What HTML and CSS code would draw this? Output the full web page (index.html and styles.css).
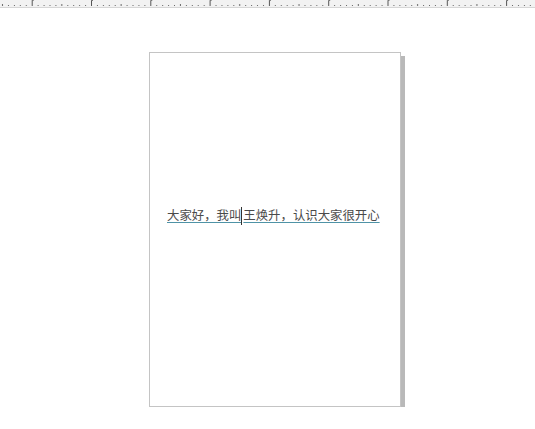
FILE: index.html
```html
<!DOCTYPE html>
<html lang="zh">
<head>
<meta charset="utf-8">
<link rel="stylesheet" href="styles.css">
</head>
<body>
<div class="ruler">
<svg width="535" height="8" viewBox="0 0 535 8">
<defs>
<pattern id="tick" x="31.7" y="0" width="59.3" height="8" patternUnits="userSpaceOnUse">
<rect x="0" y="0" width="1" height="6" fill="#555"/>
<rect x="-1" y="0" width="3" height="1" fill="#777"/>
<rect x="5.9" y="5" width="1" height="1" fill="#666"/>
<rect x="11.9" y="5" width="1" height="1" fill="#666"/>
<rect x="17.8" y="5" width="1" height="1" fill="#666"/>
<rect x="23.7" y="5" width="1" height="1" fill="#666"/>
<rect x="29.6" y="4" width="1" height="2" fill="#666"/>
<rect x="35.6" y="5" width="1" height="1" fill="#666"/>
<rect x="41.5" y="5" width="1" height="1" fill="#666"/>
<rect x="47.4" y="5" width="1" height="1" fill="#666"/>
<rect x="53.4" y="5" width="1" height="1" fill="#666"/>
</pattern>
</defs>
<rect x="0" y="0" width="535" height="7" fill="#f2f2f2"/>
<rect x="0" y="0" width="535" height="7" fill="url(#tick)"/>
<rect x="0" y="7" width="535" height="1" fill="#d6d6d6"/>
</svg>
</div>
<div class="workspace">
<div class="page">
<p class="line"><span class="txt">大家好，我叫<span class="caret"></span>王焕升，认识大家很开心</span></p>
</div>
</div>
</body>
</html>
```
FILE: styles.css
```css
html, body {
  margin: 0;
  padding: 0;
  background: #ffffff;
}
.ruler {
  height: 8px;
  line-height: 0;
}
.ruler svg {
  display: block;
}
.workspace {
  padding: 44px 0 0 149px;
}
.page {
  box-sizing: border-box;
  width: 252px;
  height: 355px;
  border: 1px solid #c4c4c4;
  background: #fff;
  box-shadow: 4px 4px 0 #b9b9b9;
}
.line {
  margin: 0;
  padding: 154px 0 0 17px;
  font-family: "Noto Sans CJK SC", sans-serif;
  font-size: 12.4px;
  line-height: 16px;
  color: #4a4a4a;
  white-space: nowrap;
}
.txt {
  text-decoration: underline;
  text-decoration-color: #4f93a6;
  text-underline-offset: 2px;
}
.caret {
  display: inline-block;
  width: 0;
  height: 18px;
  border-left: 1px solid #333;
  margin: 0 1px 0 0;
  vertical-align: -5px;
}
```
